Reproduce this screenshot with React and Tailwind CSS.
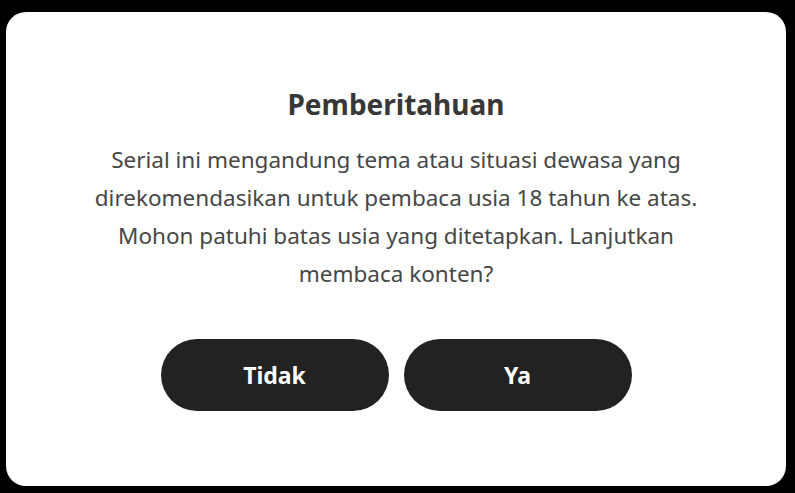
import React from "react";

const App = () => {
  return (
    <div className="h-[493px] w-full bg-black pt-[12px] pl-[6px] overflow-hidden">
      <div
        className="w-[780px] h-[474px] bg-white rounded-[20px] flex flex-col items-center pt-[72px]"
        style={{ fontFamily: '"Noto Sans", sans-serif' }}
      >
        {/* Title */}
        <h2 className="text-[28px] leading-[40px] font-bold text-[#383838]">
          Pemberitahuan
        </h2>

        {/* Body */}
        <p className="mt-[17px] text-center text-[22.5px] leading-[38px] text-[#474747]">
          Serial ini mengandung tema atau situasi dewasa yang
          <br />
          direkomendasikan untuk pembaca usia 18 tahun ke atas.
          <br />
          Mohon patuhi batas usia yang ditetapkan. Lanjutkan
          <br />
          membaca konten?
        </p>

        {/* Actions */}
        <div className="mt-[46px] flex gap-[15px]">
          <button className="w-[228px] h-[72px] rounded-full bg-[#222222] text-white text-[23px] font-bold">
            Tidak
          </button>
          <button className="w-[228px] h-[72px] rounded-full bg-[#222222] text-white text-[23px] font-bold">
            Ya
          </button>
        </div>
      </div>
    </div>
  );
};

export default App;
